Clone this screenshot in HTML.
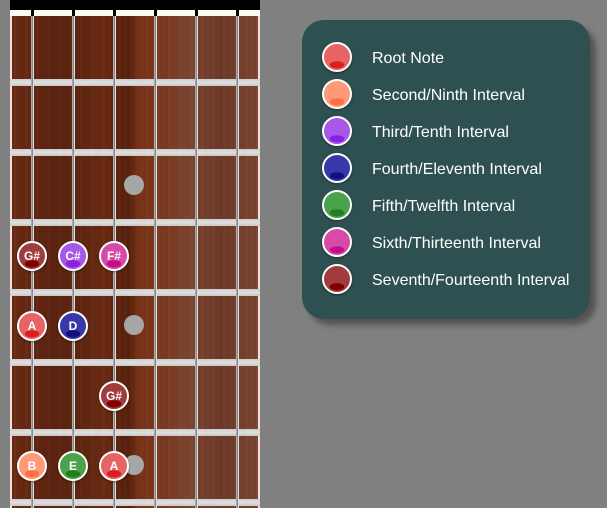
<!DOCTYPE html>
<html><head><meta charset="utf-8"><style>
body{margin:0;width:607px;height:508px;background:#808080;position:relative;overflow:hidden;font-family:"Liberation Sans",sans-serif}
.fb{position:absolute;left:10px;top:0;width:250px;height:508px;background:#000}
.wood{position:absolute;left:0;top:16px;width:250px;height:492px;
background:
repeating-linear-gradient(90deg,rgba(0,0,0,.03) 0 2px,rgba(255,255,255,.02) 2px 5px,rgba(0,0,0,.02) 5px 7px,rgba(255,255,255,0) 7px 11px),
linear-gradient(90deg,#6a2a12 0%,#5e2410 12%,#5a240f 25%,#6a2a12 38%,#55200c 47%,#7a3318 52%,#7a3a22 62%,#7b4430 72%,#6e3a28 85%,#7a4430 100%);
border-left:2px solid #f4e0e0;border-right:2px solid #f4e0e0;box-sizing:border-box}
.nut{position:absolute;left:0;top:10px;width:250px;height:6px;background:#f8fff0}
.notch{position:absolute;top:10px;width:3px;height:6px;background:#000}
.fret{position:absolute;left:0;width:250px;height:7px;background:linear-gradient(#ccc,#e0e0e0,#c8c8c8)}
.str{position:absolute;top:16px;width:3px;height:492px;border-left:1px solid #aaa;border-right:1px solid #ddd;box-sizing:border-box;background:#888}
.n{position:absolute;width:26px;height:26px;border-radius:50%;border:2px solid #fff;color:#fff;font-weight:bold;font-size:12px;text-align:center;line-height:26px;box-shadow:0 1px 2px rgba(0,0,0,.4)}
.g{position:absolute;width:20px;height:20px;border-radius:50%;background:#a6a6a6}
.leg{position:absolute;left:302px;top:20px;width:288px;height:299px;background:#2f5050;border-radius:22px;box-shadow:6px 6px 6px rgba(60,50,50,.6)}
.li{position:absolute;left:20px;height:30px}
.li .n{position:static;float:left}
.li span{position:absolute;left:50px;top:8px;color:#fff;font-size:16px;white-space:nowrap}
.r{background:radial-gradient(ellipse 45% 22% at 50% 80%,#d82020 60%,transparent 64%),#e86464}
.s2{background:radial-gradient(ellipse 45% 22% at 50% 80%,#ff7040 60%,transparent 64%),#ff9a78}
.t{background:radial-gradient(ellipse 45% 22% at 50% 80%,#8a20e0 60%,transparent 64%),#a858e8}
.f4{background:radial-gradient(ellipse 45% 22% at 50% 80%,#101080 60%,transparent 64%),#3838a8}
.f5{background:radial-gradient(ellipse 45% 22% at 50% 80%,#208020 60%,transparent 64%),#4aa24a}
.s6{background:radial-gradient(ellipse 45% 22% at 50% 80%,#c01088 60%,transparent 64%),#d84aa8}
.s7{background:radial-gradient(ellipse 45% 22% at 50% 80%,#800000 60%,transparent 64%),#a03c3c}
</style></head><body>
<div class="fb">
<div class="nut"></div>
<div class="notch" style="left:21px"></div><div class="notch" style="left:62px"></div><div class="notch" style="left:103px"></div><div class="notch" style="left:144px"></div><div class="notch" style="left:185px"></div><div class="notch" style="left:226px"></div>
<div class="wood"></div>
<div class="fret" style="top:79px"></div><div class="fret" style="top:149px"></div><div class="fret" style="top:219px"></div><div class="fret" style="top:289px"></div><div class="fret" style="top:359px"></div><div class="fret" style="top:429px"></div><div class="fret" style="top:499px"></div>
<div class="str" style="left:21px"></div><div class="str" style="left:62px"></div><div class="str" style="left:103px"></div><div class="str" style="left:144px"></div><div class="str" style="left:185px"></div><div class="str" style="left:226px"></div>
</div>
<div class="g" style="left:124px;top:175px"></div>
<div class="g" style="left:124px;top:315px"></div>
<div class="g" style="left:124px;top:455px"></div>
<div class="n s7" style="left:17px;top:241px">G#</div>
<div class="n t" style="left:58px;top:241px">C#</div>
<div class="n s6" style="left:99px;top:241px">F#</div>
<div class="n r" style="left:17px;top:311px">A</div>
<div class="n f4" style="left:58px;top:311px">D</div>
<div class="n s7" style="left:99px;top:381px">G#</div>
<div class="n s2" style="left:17px;top:451px">B</div>
<div class="n f5" style="left:58px;top:451px">E</div>
<div class="n r" style="left:99px;top:451px">A</div>
<div class="leg">
<div class="li" style="top:22px"><div class="n r"></div><span>Root Note</span></div>
<div class="li" style="top:59px"><div class="n s2"></div><span>Second/Ninth Interval</span></div>
<div class="li" style="top:96px"><div class="n t"></div><span>Third/Tenth Interval</span></div>
<div class="li" style="top:133px"><div class="n f4"></div><span>Fourth/Eleventh Interval</span></div>
<div class="li" style="top:170px"><div class="n f5"></div><span>Fifth/Twelfth Interval</span></div>
<div class="li" style="top:207px"><div class="n s6"></div><span>Sixth/Thirteenth Interval</span></div>
<div class="li" style="top:244px"><div class="n s7"></div><span>Seventh/Fourteenth Interval</span></div>
</div>
</body></html>
